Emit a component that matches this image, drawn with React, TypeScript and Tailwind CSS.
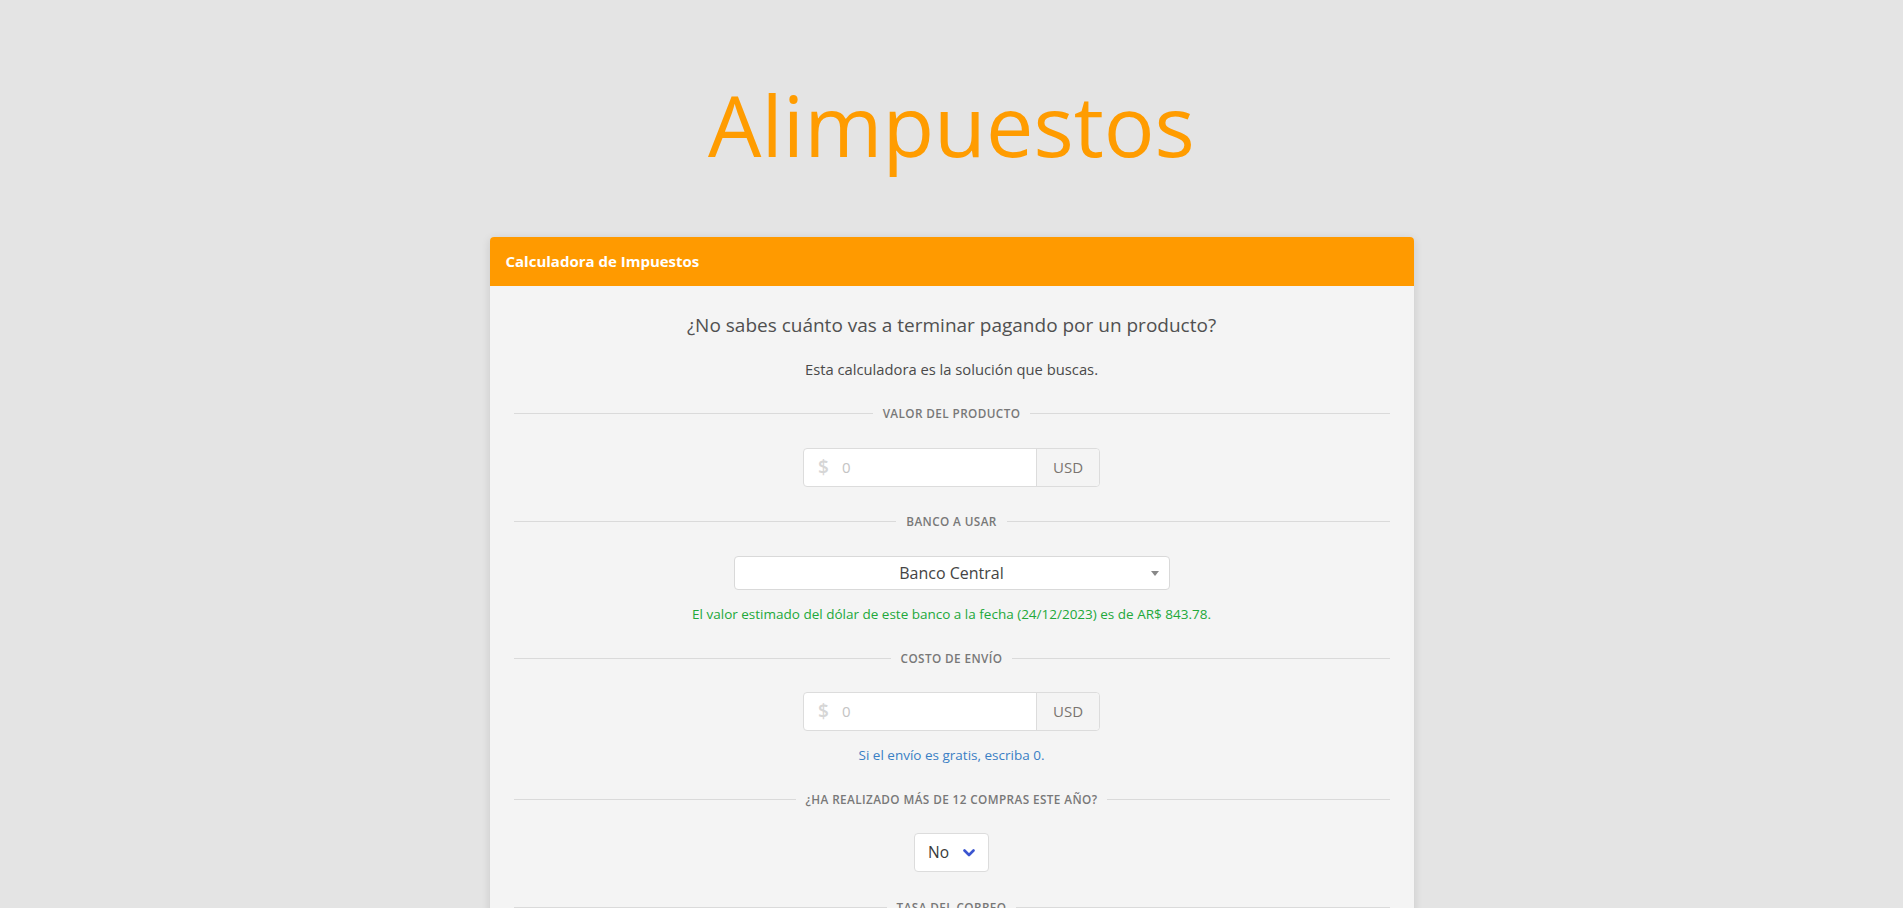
import React from "react";

const Divider = ({ label, className = "" }: { label: string; className?: string }) => (
  <div className={`flex items-center gap-[10px] ${className}`}>
    <div className="h-px flex-1 bg-[#dadada]" />
    <span className="text-[11.75px] leading-[18px] font-semibold uppercase tracking-[0.4px] text-[#787878]">
      {label}
    </span>
    <div className="h-px flex-1 bg-[#dadada]" />
  </div>
);

const MoneyInput = ({ className = "" }: { className?: string }) => (
  <div className={`mx-auto flex h-[39px] w-[297px] rounded-[4px] border border-[#dcdcdc] bg-white ${className}`}>
    <div className="flex flex-1 items-center">
      <span className="ml-[14px] text-[19px] font-semibold text-[#d6d6d6]">$</span>
      <span className="ml-[13px] text-[15px] text-[#c4c4c4]">0</span>
    </div>
    <div className="flex w-[63px] items-center justify-center border-l border-[#dcdcdc] bg-[#f4f4f4] text-[15px] text-[#7a7470] rounded-r-[4px]">
      USD
    </div>
  </div>
);

export default function App() {
  return (
    <div
      className="min-h-screen bg-[#e4e4e4] pb-10"
      style={{ fontFamily: '"Open Sans", "Noto Sans", sans-serif' }}
    >
      <h1 className="pt-[83px] text-center text-[84.5px] leading-[84px] font-normal text-[#ff9c00]">
        Alimpuestos
      </h1>
      <div className="mx-auto mt-[70px] w-[924px] overflow-hidden rounded-[4px] bg-[#f4f4f4] shadow-[0_2px_10px_rgba(0,0,0,0.12)]">
        <div className="flex h-[49px] items-center bg-[#ff9a00] px-4 text-[15px] font-bold text-white">
          Calculadora de Impuestos
        </div>
        <div className="px-6 pt-[25px] pb-10 text-center">
          <p className="text-[19px] leading-[28px] text-[#505050]">
            ¿No sabes cuánto vas a terminar pagando por un producto?
          </p>
          <p className="mt-[19px] text-[14.75px] leading-[22px] text-[#4a4a4a]">
            Esta calculadora es la solución que buscas.
          </p>

          <Divider label="Valor del producto" className="mt-6" />
          <MoneyInput className="mt-[26px]" />

          <Divider label="Banco a usar" className="mt-[25px]" />
          <div className="relative mx-auto mt-[26px] flex h-[34px] w-[436px] items-center justify-center rounded-[4px] border border-[#d9d9d9] bg-white text-[16px] text-[#444]">
            Banco Central
            <span className="absolute right-[10px] top-[14px] h-0 w-0 border-x-[4px] border-t-[5px] border-x-transparent border-t-[#888]" />
          </div>
          <p className="mt-[14px] text-[13.5px] leading-[20px] text-[#22a83a]">
            El valor estimado del dólar de este banco a la fecha (24/12/2023) es de AR$ 843.78.
          </p>

          <Divider label="Costo de envío" className="mt-[25px]" />
          <MoneyInput className="mt-[25px]" />
          <p className="mt-[14px] text-[13.5px] leading-[20px] text-[#3a7fc4]">
            Si el envío es gratis, escriba 0.
          </p>

          <Divider label="¿Ha realizado más de 12 compras este año?" className="mt-[25px]" />
          <div className="mx-auto mt-[25px] flex h-[39px] w-[75px] items-center justify-center gap-[14px] rounded-[4px] border border-[#dcdcdc] bg-white text-[15.5px] text-[#3a3a3a]">
            <span>No</span>
            <svg width="12" height="8" viewBox="0 0 12 8" fill="none">
              <path d="M1.5 1.5 L6 6 L10.5 1.5" stroke="#3b55d0" strokeWidth="2.6" strokeLinecap="round" strokeLinejoin="round" />
            </svg>
          </div>

          <Divider label="Tasa del correo" className="mt-[26px]" />
          <div className="mx-auto mt-[25px] flex h-[39px] w-[297px] items-center justify-center rounded-[4px] border border-[#dcdcdc] bg-white text-[15px] text-[#444]">
            AR$ 0
          </div>
        </div>
      </div>
    </div>
  );
}
